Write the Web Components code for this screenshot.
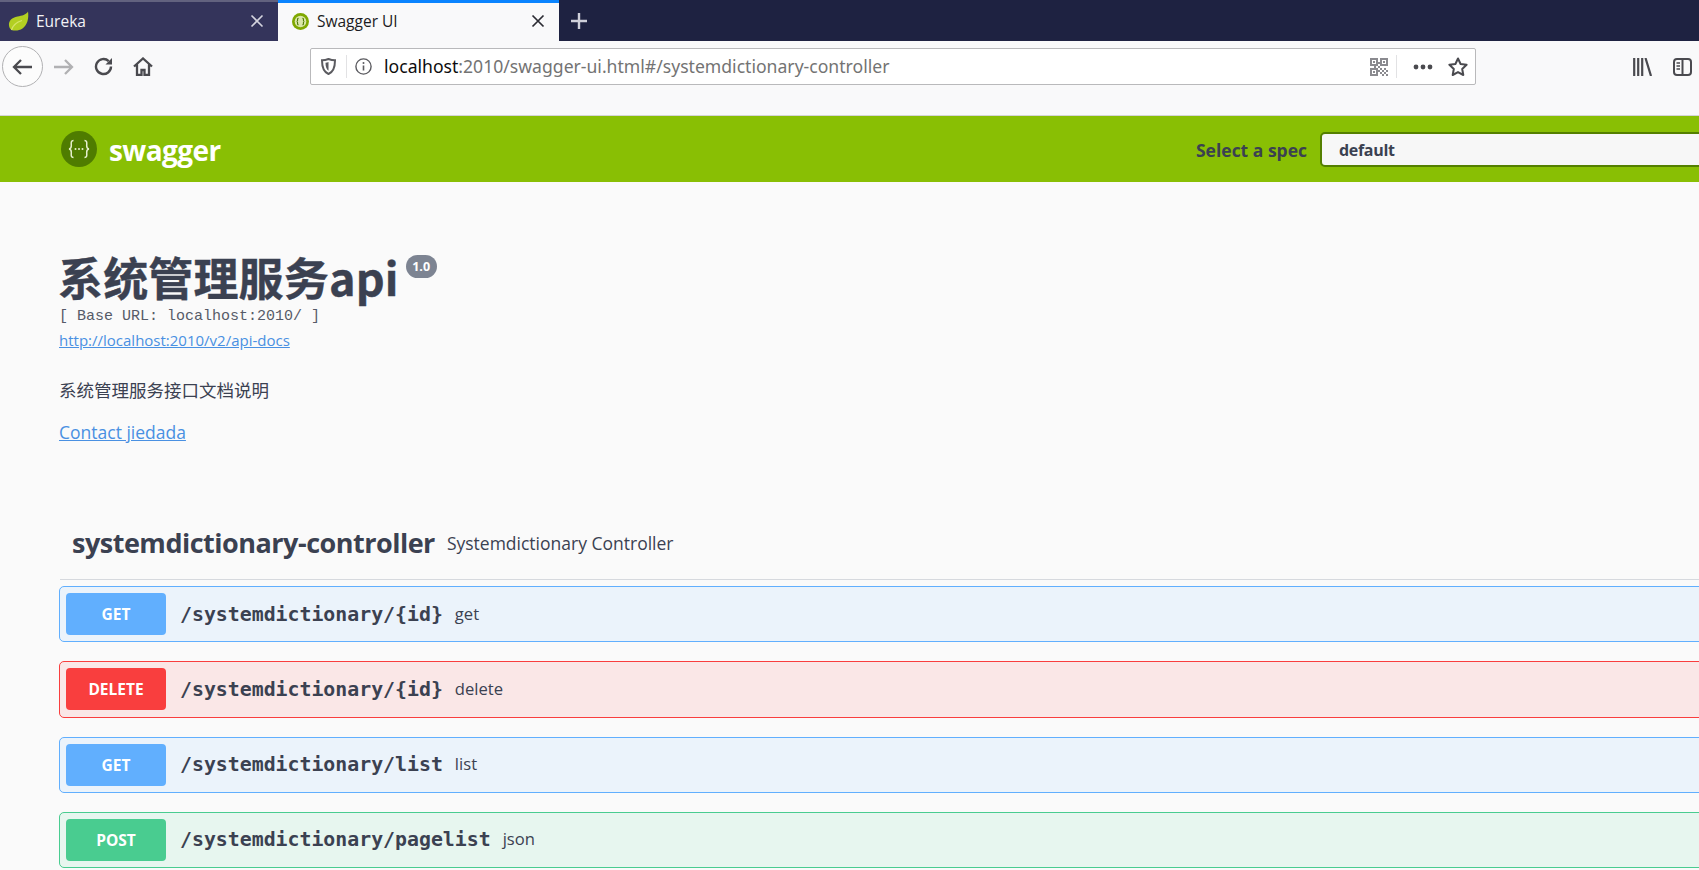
<!DOCTYPE html>
<html lang="zh"><head><meta charset="utf-8"><title>Swagger UI</title>
<style>
html,body{margin:0;padding:0;width:1699px;height:870px;overflow:hidden;background:#fafafa}
body{font-family:"Open Sans","Noto Sans CJK SC",sans-serif;color:#3b4151}
</style></head><body>
<browser-tabs></browser-tabs>
<nav-toolbar></nav-toolbar>
<swagger-topbar></swagger-topbar>
<api-info></api-info>
<op-tag name="systemdictionary-controller" desc="Systemdictionary Controller"></op-tag>
<op-list>
<op-block method="GET" path="/systemdictionary/{id}" summary="get"></op-block>
<op-block method="DELETE" path="/systemdictionary/{id}" summary="delete"></op-block>
<op-block method="GET" path="/systemdictionary/list" summary="list"></op-block>
<op-block method="POST" path="/systemdictionary/pagelist" summary="json"></op-block>
</op-list>
<script>
function def(name,html,init){customElements.define(name,class extends HTMLElement{connectedCallback(){if(this.shadowRoot)return;const r=this.attachShadow({mode:'open'});r.innerHTML=typeof html==='function'?html(this):html;}});}

def('browser-tabs',`<style>
:host{display:flex;height:41px;background:#1e2241;font:15.500px "Open Sans",sans-serif;box-sizing:border-box}
.tab{display:flex;align-items:center;box-sizing:border-box;height:41px;flex:none;padding-bottom:2px}
.a{width:278px;background:#34345b;border-top:2px solid #62627f;color:#f2f2f6;padding-left:8px}
.b{width:281px;background:#f9f9fa;border-top:3px solid #0a84ff;color:#1b1b22;padding-left:14px}
.t{margin-left:8px;flex:1}
.a .t{margin-left:7px}
.x{flex:none;margin-right:14px}
.plus{margin-left:11px;align-self:center;display:flex}
</style>
<div class="tab a"><svg width="21" height="20" viewBox="0 0 21 20"><path d="M20 .5C18 4 14 4.500 9.500 5.500 4 6.800 .5 9.500 1 14.500c.2 2 1.300 3.500 2.500 4.500C6.500 19.800 11 20 14.500 17.500 19.500 14 21 7 20 .5z" fill="#b2cf22"/><path d="M3.500 19C5 14 9 11 14 9.500" fill="none" stroke="#d5e468" stroke-width="1.300"/></svg><span class="t">Eureka</span><svg class="x" width="14" height="14" viewBox="0 0 14 14"><path d="M1.500 1.500l11 11M12.500 1.500l-11 11" stroke="#d4d4de" stroke-width="1.600"/></svg></div>
<div class="tab b"><svg width="17" height="17" viewBox="0 0 17 17"><circle cx="8.500" cy="8.500" r="8.500" fill="#7fa800"/><circle cx="8.500" cy="8.500" r="5.800" fill="#d9e6a8"/><path d="M6.600 5.200C5.300 5.200 5.600 6.400 5.600 7.300 5.600 8 5.200 8.500 4.600 8.500c.6 0 1 .5 1 1.200 0 .9-.3 2.100 1 2.100M10.400 5.200c1.300 0 1 1.200 1 2.100 0 .7.400 1.200 1 1.200-.6 0-1 .5-1 1.200 0 .9.300 2.100-1 2.100" stroke="#4e7a00" fill="none" stroke-width="1.100"/></svg><span class="t">Swagger UI</span><svg class="x" width="14" height="14" viewBox="0 0 14 14"><path d="M1.500 1.500l11 11M12.500 1.500l-11 11" stroke="#2b2b33" stroke-width="1.700"/></svg></div>
<div class="plus"><svg width="18" height="18" viewBox="0 0 18 18"><path d="M9 1v16M1 9h16" stroke="#cfd0da" stroke-width="2.400"/></svg></div>`);

const ic='fill="none" stroke="#4a4a4f" stroke-width="2"';
def('nav-toolbar',`<style>
:host{display:flex;align-items:flex-start;height:74px;background:#f9f9fa;padding-top:5px;box-sizing:border-box}
.btn{width:40px;height:41px;display:flex;align-items:center;justify-content:center;flex:none}
.back{width:41px;margin-left:2px;box-sizing:border-box;border:1px solid #b1b1b3;border-radius:50%;background:#fcfcfc}
.home{margin-right:147px}
url-bar{margin-top:2px}
.right{display:flex;margin-left:157px}
.rb{height:41px;display:flex;align-items:center}
</style>
<div class="btn back"><svg width="21" height="18" viewBox="0 0 21 18"><path d="M20 9H2M9 2L2 9l7 7" fill="none" stroke="#4a4a4f" stroke-width="2.300"/></svg></div>
<div class="btn"><svg width="21" height="18" viewBox="0 0 21 18"><path d="M1 9h18M12 2l7 7-7 7" fill="none" stroke="#b1b1b3" stroke-width="2.300"/></svg></div>
<div class="btn"><svg width="19" height="19" viewBox="0 0 19 19"><path d="M17 9.500a7.500 7.500 0 1 1-2.300-5.400" fill="none" stroke="#4a4a4f" stroke-width="2.400"/><path d="M18 1v6.500h-6.500z" fill="#4a4a4f"/></svg></div>
<div class="btn home"><svg width="20" height="19" viewBox="0 0 20 19"><path d="M1 9.500L10 1.500l9 8M4 7.500V18h4.500v-5h3v5H16V7.500" fill="none" stroke="#4a4a4f" stroke-width="2.300"/></svg></div>
<url-bar></url-bar>
<div class="right"><div class="rb"><svg width="19" height="18" viewBox="0 0 19 18"><path d="M1.200 0v18M5.200 0v18M9.200 0v18M12.500 0l5.500 18" fill="none" stroke="#4a4a4f" stroke-width="2.200"/></svg></div>
<div class="rb" style="margin-left:21px"><svg width="19" height="18" viewBox="0 0 19 18"><rect x="1" y="1" width="17" height="16" rx="3" ${ic}/><path d="M9.500 1v16" ${ic}/><path d="M3.500 5h3.500M3.500 8h3.500M3.500 11h3.500" stroke="#4a4a4f" stroke-width="1.300"/></svg></div></div>`);

def('url-bar',`<style>
:host{display:flex;align-items:center;box-sizing:border-box;width:1166px;height:37px;background:#fff;border:1px solid #b9b9bb;border-radius:2px;flex:none;font:17.600px "Noto Sans",sans-serif;color:#737373}
.sh{margin-left:10px;flex:none;display:flex}
.sep{width:1px;height:23px;background:#e2e2e4;flex:none}
.s1{margin-left:10px}
.info{margin-left:8px;display:flex;flex:none}
.u{margin-left:12px;flex:1;white-space:nowrap;padding-bottom:1px}
.u b{font-weight:400;color:#0c0c0d}
.qr{display:flex;flex:none}
.s2{margin-left:8px}
.dots{margin-left:16px;display:flex;flex:none}
.star{margin-left:15px;margin-right:7px;display:flex;flex:none}
</style>
<span class="sh"><svg width="15" height="17" viewBox="0 0 15 17"><path d="M7.500 1C5 2 3 2.300 1 2.300 1 10 2.500 14 7.500 16 12.500 14 14 10 14 2.300 12 2.300 10 2 7.500 1z" fill="none" stroke="#5b5b60" stroke-width="2"/><path d="M7.500 4c-1 .4-2 .7-3 .7 0 4 1 6.800 3 8z" fill="#5b5b60"/></svg></span>
<span class="sep s1"></span>
<span class="info"><svg width="17" height="17" viewBox="0 0 17 17"><circle cx="8.500" cy="8.500" r="7.600" fill="none" stroke="#5b5b60" stroke-width="1.400"/><path d="M8.500 7.500v5" stroke="#5b5b60" stroke-width="1.600"/><circle cx="8.500" cy="5" r="1" fill="#5b5b60"/></svg></span>
<span class="u"><b>localhost</b>:2010/swagger-ui.html#/systemdictionary-controller</span>
<span class="qr"><svg width="18" height="18" viewBox="0 0 18 18" shape-rendering="crispEdges" fill="#8a8a8f"><path d="M0 0h8v8H0zM2 2v4h4V2zM10 0h8v8h-8zM12 2v4h4V2zM0 10h8v8H0zM2 12v4h4v-4z" fill-rule="evenodd"/><path d="M3 3h2v2H3zM13 3h2v2h-2zM3 13h2v2H3zM10 10h2v2h-2zM12 12h2v2h-2zM14 10h2v2h-2zM16 12h2v2h-2zM10 14h2v2h-2zM14 14h2v2h-2zM12 16h2v2h-2zM16 16h2v2h-2zM8 4h2v2H8zM4 8h2v2H4zM8 12h2v2H8zM8 8h2v2H8z"/></svg></span>
<span class="sep s2"></span>
<span class="dots"><svg width="20" height="6" viewBox="0 0 20 6" fill="#4a4a4f"><circle cx="3" cy="3" r="2.400"/><circle cx="10" cy="3" r="2.400"/><circle cx="17" cy="3" r="2.400"/></svg></span>
<span class="star"><svg width="20" height="20" viewBox="0 0 20 20"><path d="M10 1.500l2.600 5.500 6 .8-4.400 4.200 1.100 6L10 15.100 4.700 18l1.100-6L1.400 7.800l6-.8z" fill="none" stroke="#4a4a4f" stroke-width="2" stroke-linejoin="round"/></svg></span>`);

def('swagger-topbar',`<style>
:host{display:flex;align-items:center;height:67px;background:#89bf04;padding-left:61px;box-sizing:border-box;border-top:1px solid #d5d5d5}
.logo{flex:none;display:flex}
.name{margin-left:12px;margin-top:2px;font:700 28px "Open Sans",sans-serif;color:#fff;letter-spacing:-.6px;flex:none}
.sp{flex:1}
.lab{font:700 17.500px "Open Sans",sans-serif;color:#3b4151;margin:2px 13px 0 0;flex:none}
.sel{flex:none;box-sizing:border-box;width:421px;height:35px;margin-right:-42px;border:2px solid #547f00;border-radius:5px;background:#f7f7f7;font:700 16px "Open Sans",sans-serif;color:#3b4151;display:flex;align-items:center;padding:1px 0 0 17px;letter-spacing:-.3px}
</style>
<span class="logo"><svg width="36" height="36" viewBox="0 0 36 36"><circle cx="18" cy="18" r="18" fill="#4f7c00"/><path d="M12.500 9.500c-3 0-2.200 3-2.200 5.300 0 1.800-.8 3-2.300 3.200 1.500.2 2.300 1.400 2.300 3.200 0 2.300-.8 5.300 2.200 5.300M23.500 9.500c3 0 2.200 3 2.200 5.300 0 1.800.8 3 2.300 3.200-1.500.2-2.300 1.400-2.300 3.200 0 2.300.8 5.300-2.200 5.300" fill="none" stroke="#e6efce" stroke-width="1.500"/><circle cx="14.500" cy="18" r="1" fill="#e6efce"/><circle cx="18" cy="18" r="1" fill="#e6efce"/><circle cx="21.500" cy="18" r="1" fill="#e6efce"/></svg></span>
<span class="name">swagger</span><span class="sp"></span>
<span class="lab">Select a spec</span><div class="sel">default</div>`);

def('api-info',`<style>
:host{display:block;padding:63px 0 0 59px;box-sizing:border-box;height:322.500px}
.h{display:flex;align-items:flex-start;font:700 45px/64px "Open Sans","Noto Sans CJK SC",sans-serif;color:#3b4151;height:62px;margin-left:-1px}
.h .t{font-family:"Noto Sans CJK SC","Open Sans",sans-serif;-webkit-text-stroke:.4px #3b4151;letter-spacing:.15px}
.v{margin:10px 0 0 7px;box-sizing:border-box;width:31px;height:23px;border-radius:12px;background:#7d8492;color:#fff;font:700 12.500px/23px "Open Sans",sans-serif;text-align:center}
.b{font:15px/20px "Liberation Mono",monospace;color:#565b68}
a{color:#4990e2;text-decoration:underline}
.l{font:15px/20px "Open Sans",sans-serif;margin-top:3px}
.d{font:17.500px/24px "Noto Sans CJK SC","Open Sans",sans-serif;margin-top:28px}
.c{font:17.500px/24px "Open Sans",sans-serif;margin-top:18px}
</style>
<div class="h"><span class="t">系统管理服务api</span><span class="v">1.0</span></div>
<div class="b">[ Base URL: localhost:2010/ ]</div>
<div class="l"><a>http://localhost:2010/v2/api-docs</a></div>
<div class="d">系统管理服务接口文档说明</div>
<div class="c"><a>Contact jiedada</a></div>`);

def('op-tag',h=>`<style>
:host{margin-left:60px;height:75px;box-sizing:border-box;padding:2px 0 0 12px;border-bottom:1px solid #d6d9de;display:flex;align-items:center}
.n{font:700 27px "Open Sans",sans-serif;letter-spacing:-.5px;color:#3b4151;white-space:nowrap}
.d{font:17.500px "Open Sans",sans-serif;margin-left:12px;color:#3b4151;white-space:nowrap}
</style><span class="n">${h.getAttribute('name')}</span><span class="d">${h.getAttribute('desc')}</span>`);

def('op-list',`<style>:host{display:flex;flex-direction:column;gap:19px;padding:6.500px 0 0 59px;width:1720px;box-sizing:border-box}</style><slot></slot>`);

const col={GET:['#ebf3fb','#61affe'],DELETE:['#fae7e7','#f93e3e'],POST:['#e7f6ef','#49cc90']};
def('op-block',h=>{const m=h.getAttribute('method'),c=col[m];return `<style>
:host{display:flex;align-items:center;box-sizing:border-box;height:56.250px;background:${c[0]};border:1.250px solid ${c[1]};border-radius:5px;padding-left:6px;color:#3b4151}
.m{flex:none;width:100px;height:42px;background:${c[1]};border-radius:4px;color:#fff;font:700 15.500px/42px "Open Sans",sans-serif;text-align:center}
.p{flex:none;margin-left:14px;font:700 19.850px "DejaVu Sans Mono",monospace}
.s{margin-left:12px;font:16.600px "Open Sans",sans-serif;padding-bottom:2px}
</style><span class="m">${m}</span><span class="p">${h.getAttribute('path')}</span><span class="s">${h.getAttribute('summary')}</span>`});
</script>
</body></html>
